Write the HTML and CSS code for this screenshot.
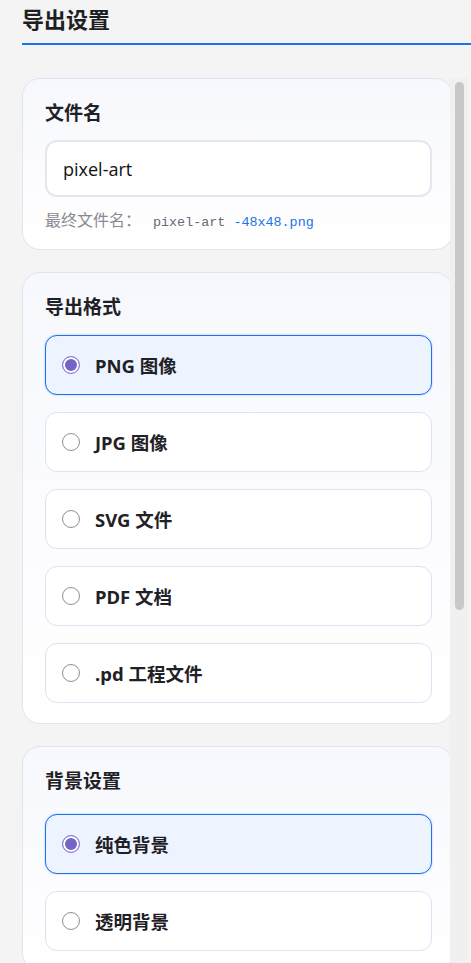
FILE: index.html
```html
<!DOCTYPE html>
<html lang="zh-CN">
<head>
<meta charset="utf-8">
<title>导出设置</title>
<link rel="stylesheet" href="styles.css">
</head>
<body>
<div class="page">
  <header class="head"><h1 class="title">导出设置</h1></header>
  <div class="scroll-area">
    <div class="viewport">
      <div class="list">
        <section class="card card-name">
          <div class="card-label">文件名</div>
          <input class="name-input" type="text" value="pixel-art">
          <div class="final">最终文件名：<code class="final-code">pixel-art <span class="suffix">-48x48.png</span></code></div>
        </section>

        <section class="card card-format">
          <div class="card-label">导出格式</div>
          <div class="options">
            <label class="option is-selected"><span class="radio"></span><span class="option-text">PNG 图像</span></label>
            <label class="option"><span class="radio"></span><span class="option-text">JPG 图像</span></label>
            <label class="option"><span class="radio"></span><span class="option-text">SVG 文件</span></label>
            <label class="option"><span class="radio"></span><span class="option-text">PDF 文档</span></label>
            <label class="option"><span class="radio"></span><span class="option-text">.pd 工程文件</span></label>
          </div>
        </section>

        <section class="card">
          <div class="card-label">背景设置</div>
          <div class="options options-bg">
            <label class="option is-selected"><span class="radio"></span><span class="option-text">纯色背景</span></label>
            <label class="option"><span class="radio"></span><span class="option-text">透明背景</span></label>
          </div>
        </section>
      </div>
    </div>
    <div class="scrollbar"><div class="thumb"></div></div>
  </div>
</div>
</body>
</html>
```

FILE: styles.css
```css
html, body {
  margin: 0;
  padding: 0;
}

body {
  background: #f4f4f4;
  height: 963px;
  overflow: hidden;
  font-family: "Noto Sans", "Noto Sans CJK SC", sans-serif;
  color: #1f2126;
}

.page {
  padding-left: 22px;
}

.head {
  padding-top: 4px;
  padding-bottom: 9px;
  border-bottom: 2px solid #1a73e8;
}

.title {
  margin: 0;
  font-size: 22px;
  line-height: 30px;
  font-weight: 700;
  color: #1f1f1f;
}

.scroll-area {
  margin-top: 33px;
  display: flex;
  height: 885px;
}

.viewport {
  width: 428px;
  height: 100%;
  overflow: hidden;
}

.list {
  width: 431px;
  display: flex;
  flex-direction: column;
  gap: 22px;
}

.scrollbar {
  width: 18px;
  height: 100%;
  background: #f0f0f0;
  box-sizing: border-box;
  padding: 4px 4px 0 5px;
}

.thumb {
  height: 528px;
  border-radius: 5px;
  background: #c8c8c8;
}

.card {
  border: 1px solid #dfe4f3;
  border-radius: 18px;
  background: linear-gradient(180deg, #f7f8fd 0%, #ffffff 100%);
  padding: 22px 20px 19px 22px;
}

.card-name {
  padding-bottom: 14px;
}

.card-format {
  padding-bottom: 20px;
}

.card-label {
  font-size: 19px;
  line-height: 24px;
  font-weight: 700;
  color: #1f2126;
}

.name-input {
  display: block;
  box-sizing: border-box;
  width: 100%;
  height: 57px;
  margin-top: 15px;
  padding: 0 16px;
  border: 2px solid #e6e7ee;
  border-radius: 12px;
  background: #fff;
  font-family: "Open Sans", "Noto Sans", sans-serif;
  font-size: 18px;
  color: #111;
  outline: none;
}

.final {
  margin-top: 11px;
  font-size: 16px;
  line-height: 24px;
  color: #8a8a92;
}

.final-code {
  margin-left: 12px;
  font-family: "Liberation Mono", "DejaVu Sans Mono", monospace;
  font-size: 13.4px;
  color: #666a75;
}

.suffix {
  color: #1a73e8;
}

.options {
  margin-top: 16px;
  display: flex;
  flex-direction: column;
  gap: 17px;
}

.options-bg {
  margin-top: 21px;
}

.option {
  display: flex;
  align-items: center;
  gap: 15px;
  box-sizing: border-box;
  height: 60px;
  padding: 0 16px;
  border: 1px solid #dde2f3;
  border-radius: 12px;
  background: #fff;
}

.option.is-selected {
  background: #edf4ff;
  border-color: #1a73e8;
  box-shadow: 0 0 2px rgba(26, 115, 232, 0.45);
}

.radio {
  flex: none;
  box-sizing: border-box;
  width: 18px;
  height: 18px;
  border: 1px solid #8f8f96;
  border-radius: 50%;
  background: #fff;
}

.option.is-selected .radio {
  border-color: #8a7dd6;
  background: #7464c6;
  box-shadow: inset 0 0 0 2px #fff;
}

.option-text {
  font-size: 18.5px;
  font-weight: 700;
  color: #1f2126;
}
```
